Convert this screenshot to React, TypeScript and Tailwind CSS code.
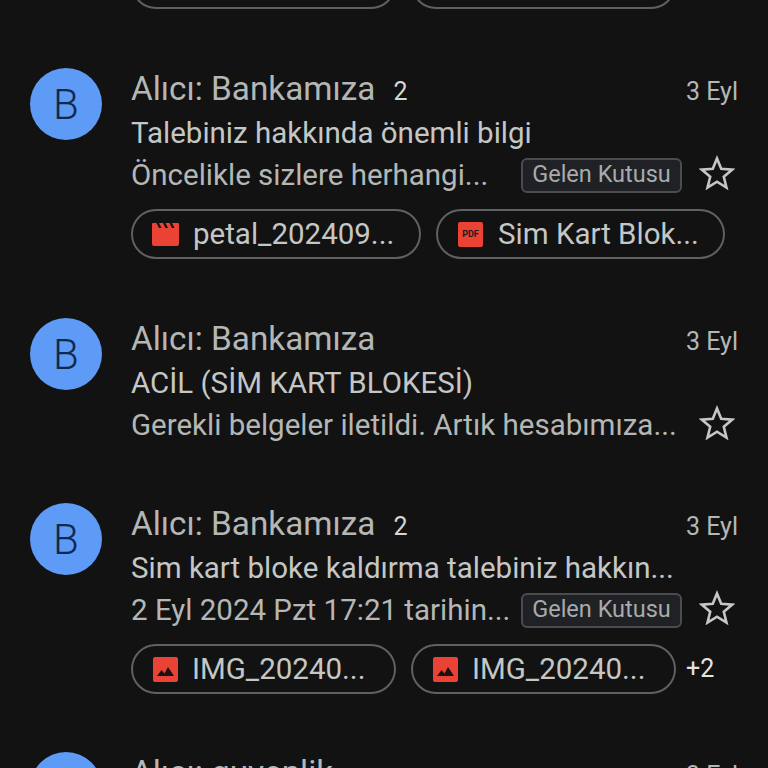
type Attachment = {
  kind: "video" | "pdf" | "image";
  name: string;
  width: string;
};

type Mail = {
  id: number;
  sender: string;
  count?: number;
  date: string;
  subject: string;
  snippet: string;
  inbox?: boolean;
  attachments?: Attachment[];
  more?: string;
  gap: string;
};

const mails: Mail[] = [
  {
    id: 1,
    sender: "Alıcı: Bankamıza",
    count: 2,
    date: "3 Eyl",
    subject: "Talebiniz hakkında önemli bilgi",
    snippet: "Öncelikle sizlere herhangi...",
    inbox: true,
    attachments: [
      { kind: "video", name: "petal_202409...", width: "w-[290px]" },
      { kind: "pdf", name: "Sim Kart Blok...", width: "w-[289px]" },
    ],
    gap: "mb-[59px]",
  },
  {
    id: 2,
    sender: "Alıcı: Bankamıza",
    date: "3 Eyl",
    subject: "ACİL (SİM KART BLOKESİ)",
    snippet: "Gerekli belgeler iletildi. Artık hesabımıza...",
    gap: "mb-[57px]",
  },
  {
    id: 3,
    sender: "Alıcı: Bankamıza",
    count: 2,
    date: "3 Eyl",
    subject: "Sim kart bloke kaldırma talebiniz hakkın...",
    snippet: "2 Eyl 2024 Pzt 17:21 tarihin...",
    inbox: true,
    attachments: [
      { kind: "image", name: "IMG_20240...", width: "w-[265px]" },
      { kind: "image", name: "IMG_20240...", width: "w-[265px]" },
    ],
    more: "+2",
    gap: "mb-[58px]",
  },
  {
    id: 4,
    sender: "Alıcı: guvenlik",
    date: "3 Eyl",
    subject: "",
    snippet: "",
    gap: "",
  },
];

function StarOutline() {
  return (
    <svg className="w-[36px] h-[35px] -mt-[6px]" viewBox="0 0 36 35" fill="none" aria-hidden="true">
      <path
        stroke="#c4c7c5"
        strokeWidth="2.6"
        strokeLinejoin="miter"
        d="M18 3.500l4.200 10.300 11.100.8-8.500 7.200 2.700 10.800L18 26.700l-9.500 5.900 2.700-10.800-8.500-7.200 11.100-.8z"
      />
    </svg>
  );
}

function FileIcon({ kind }: { kind: Attachment["kind"] }) {
  if (kind === "video") {
    return (
      <svg className="w-[27px] h-[23px] shrink-0 -ml-px" viewBox="0 0 27 23" aria-hidden="true">
        <path
          fill="#ea4335"
          d="M1 0h3.500l2.500 5h2.500L7 0h4l2.500 5H16l-2.500-5h4l2.500 5h2.500l-2.500-5H26a1 1 0 0 1 1 1v20a2 2 0 0 1-2 2H2a2 2 0 0 1-2-2V1a1 1 0 0 1 1-1z"
        />
      </svg>
    );
  }
  if (kind === "pdf") {
    return (
      <div className="w-[25px] h-[25px] shrink-0 mr-px rounded-[2px] bg-[#ea4335] flex items-center justify-center text-[9px] leading-none font-bold text-[#1a1a1a]">
        PDF
      </div>
    );
  }
  return (
    <svg className="w-[25px] h-[25px] shrink-0" viewBox="0 0 25 25" aria-hidden="true">
      <rect width="25" height="25" rx="2" fill="#ea4335" />
      <path fill="#1a1212" d="M4 19l4.500-6 3 3.500L15 10l6 9z" />
    </svg>
  );
}

function Chip({ file }: { file: Attachment }) {
  return (
    <div
      className={`${file.width} h-[50px] shrink-0 flex items-center gap-[14px] rounded-full border-2 border-[#5f6061] pl-5 text-[29.5px] leading-none text-[#c4c7c5] whitespace-nowrap`}
    >
      <FileIcon kind={file.kind} />
      <span className="mt-px">{file.name}</span>
    </div>
  );
}

function MailRow({ mail }: { mail: Mail }) {
  return (
    <div className={`flex gap-[29px] ${mail.gap}`}>
      <div className="w-[72px] h-[72px] shrink-0 rounded-full bg-[#5e9bf7] flex items-center justify-center text-[42px] font-light text-[#10294f]">
        B
      </div>
      <div className="flex-1 min-w-0">
        <div className="h-[42px] flex items-center">
          <span className="text-[33.3px] text-[#b4b7b5] whitespace-nowrap">{mail.sender}</span>
          {mail.count && <span className="ml-[18px] mt-[6px] text-[25px] text-[#d5d7d5]">{mail.count}</span>}
          <span className="ml-auto mt-[6px] text-[25px] text-[#b4b7b5]">{mail.date}</span>
        </div>
        <div className="mt-[2px] h-[42px] flex items-center text-[29.5px] text-[#c4c7c5] whitespace-nowrap">
          {mail.subject}
        </div>
        <div className="h-[42px] flex items-center text-[29.5px] text-[#b4b7b5] whitespace-nowrap">
          <span>{mail.snippet}</span>
          <div className="ml-auto flex items-center pr-[3px]">
            {mail.inbox && (
              <span className="w-[161px] h-[35px] mr-[17px] rounded-md border-2 border-[#4a4c50] bg-[#1f2125] flex items-center justify-center text-[23.5px] text-[#a8abad]">
                Gelen Kutusu
              </span>
            )}
            <StarOutline />
          </div>
        </div>
        {mail.attachments && (
          <div className="mt-[13px] flex items-center gap-[15px]">
            {mail.attachments.map((file, i) => (
              <Chip key={i} file={file} />
            ))}
            {mail.more && <span className="-ml-[5px] text-[25px] text-[#e3e3e3]">{mail.more}</span>}
          </div>
        )}
      </div>
    </div>
  );
}

export default function App() {
  return (
    <div className="h-[768px] overflow-hidden bg-[#121212] pl-[30px] pr-[30px] font-['Roboto','Noto_Sans',sans-serif]">
      <div className="-mt-[41px] mb-[59px] pl-[101px] flex gap-[15px]">
        <Chip file={{ kind: "image", name: "IMG_20240...", width: "w-[265px]" }} />
        <Chip file={{ kind: "image", name: "petal_2024...", width: "w-[265px]" }} />
      </div>
      {mails.map((mail) => (
        <MailRow key={mail.id} mail={mail} />
      ))}
    </div>
  );
}
